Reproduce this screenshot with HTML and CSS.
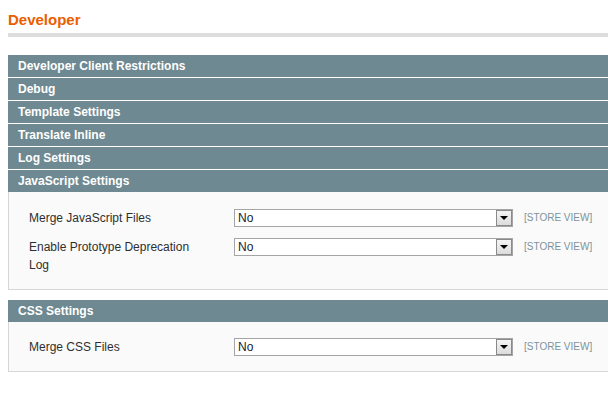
FILE: index.html
```html
<!DOCTYPE html>
<html>
<head>
    <title>Developer</title>
    <link rel="stylesheet" href="styles.css">
</head>
<body>
    <div class="content-header">
        <h3>Developer</h3>
    </div>

    <div class="section">
        <a class="section-head">Developer Client Restrictions</a>
        <a class="section-head">Debug</a>
        <a class="section-head">Template Settings</a>
        <a class="section-head">Translate Inline</a>
        <a class="section-head">Log Settings</a>
        <a class="section-head">JavaScript Settings</a>
        <div class="fieldset">
            <div class="form-row">
                <label for="merge_js">Merge JavaScript Files</label>
                <div class="select-box">
                    <select id="merge_js"><option>No</option><option>Yes</option></select>
                    <span class="select-btn"></span>
                </div>
                <span class="scope-label">[STORE VIEW]</span>
            </div>
            <div class="form-row">
                <label for="proto_log">Enable Prototype Deprecation Log</label>
                <div class="select-box">
                    <select id="proto_log"><option>No</option><option>Yes</option></select>
                    <span class="select-btn"></span>
                </div>
                <span class="scope-label">[STORE VIEW]</span>
            </div>
        </div>
    </div>

    <div class="section">
        <a class="section-head">CSS Settings</a>
        <div class="fieldset fieldset-css">
            <div class="form-row">
                <label for="merge_css">Merge CSS Files</label>
                <div class="select-box">
                    <select id="merge_css"><option>No</option><option>Yes</option></select>
                    <span class="select-btn"></span>
                </div>
                <span class="scope-label">[STORE VIEW]</span>
            </div>
        </div>
    </div>
</body>
</html>
```

FILE: styles.css
```css
body {
    font-family: "Liberation Sans", Arial, sans-serif;
    font-size: 12px;
    color: #2f2f2f;
    margin: 0;
    padding: 0 0 0 8px;
    background: #fff;
}
.content-header {
    border-bottom: 4px solid #ddd;
    padding-top: 11px;
    height: 22px;
    margin-bottom: 18px;
}
.content-header h3 {
    margin: 0;
    color: #eb5e00;
    font-size: 15px;
    line-height: 18px;
    font-weight: bold;
}
.section {
    margin-bottom: 10px;
}
.section-head {
    display: block;
    background: #6f8992;
    color: #fff;
    font-weight: bold;
    height: 22px;
    line-height: 23px;
    padding-left: 10px;
    margin-bottom: 1px;
}
.section-head:last-of-type {
    margin-bottom: 0;
}
.fieldset {
    background: #fafafa;
    border: 1px solid #d6d6d6;
    border-top: 0;
    border-right: 0;
    padding: 17px 0 15px 20px;
}
.fieldset-css {
    padding-top: 16px;
}
.form-row {
    display: flex;
    align-items: flex-start;
    margin-bottom: 11px;
}
.form-row:last-child {
    margin-bottom: 0;
}
.form-row label {
    width: 172px;
    margin-right: 33px;
    line-height: 18px;
}
.select-box {
    display: flex;
    width: 277px;
    height: 16px;
    border: 1px solid #a5a5a5;
    background: #fff;
}
.select-box select {
    appearance: none;
    -webkit-appearance: none;
    flex: 1;
    border: 0;
    margin: 0;
    padding: 0 0 0 3px;
    height: 16px;
    background: transparent;
    font-family: "Liberation Sans", Arial, sans-serif;
    font-size: 12px;
    color: #1a1a2e;
    outline: none;
}
.select-btn {
    width: 14px;
    height: 14px;
    border: 1px solid #8a8a8a;
    background: linear-gradient(#f4f4f4, #dcdcdc);
    position: relative;
}
.select-btn::after {
    content: "";
    position: absolute;
    left: 3px;
    top: 5px;
    border-left: 4px solid transparent;
    border-right: 4px solid transparent;
    border-top: 4px solid #000;
}
.scope-label {
    margin-left: 11px;
    font-size: 10px;
    line-height: 18px;
    color: #7d939c;
}
```
